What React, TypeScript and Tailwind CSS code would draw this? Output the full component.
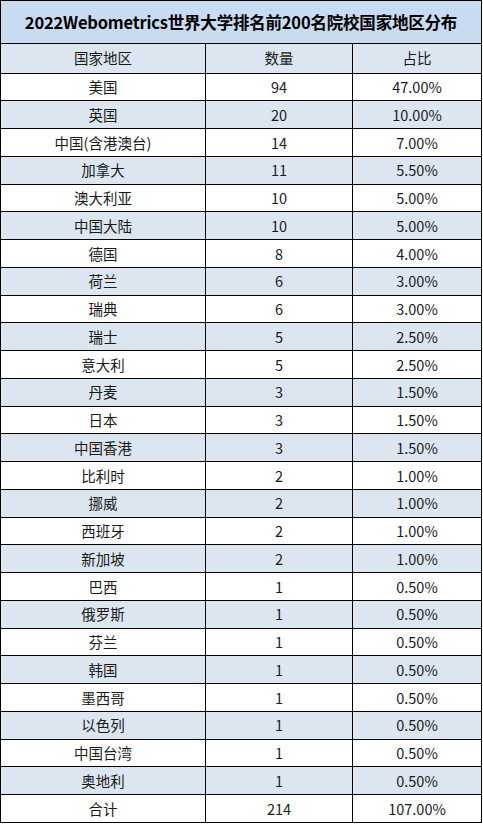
const rows: [string, string, string][] = [
  ["美国", "94", "47.00%"],
  ["英国", "20", "10.00%"],
  ["中国(含港澳台)", "14", "7.00%"],
  ["加拿大", "11", "5.50%"],
  ["澳大利亚", "10", "5.00%"],
  ["中国大陆", "10", "5.00%"],
  ["德国", "8", "4.00%"],
  ["荷兰", "6", "3.00%"],
  ["瑞典", "6", "3.00%"],
  ["瑞士", "5", "2.50%"],
  ["意大利", "5", "2.50%"],
  ["丹麦", "3", "1.50%"],
  ["日本", "3", "1.50%"],
  ["中国香港", "3", "1.50%"],
  ["比利时", "2", "1.00%"],
  ["挪威", "2", "1.00%"],
  ["西班牙", "2", "1.00%"],
  ["新加坡", "2", "1.00%"],
  ["巴西", "1", "0.50%"],
  ["俄罗斯", "1", "0.50%"],
  ["芬兰", "1", "0.50%"],
  ["韩国", "1", "0.50%"],
  ["墨西哥", "1", "0.50%"],
  ["以色列", "1", "0.50%"],
  ["中国台湾", "1", "0.50%"],
  ["奥地利", "1", "0.50%"],
  ["合计", "214", "107.00%"],
];

const font = { fontFamily: '"Noto Sans CJK SC", "Noto Sans", sans-serif' };

function Cell({ children, last }: { children: React.ReactNode; last?: boolean }) {
  return (
    <div
      className={`flex items-center justify-center border-b border-black text-[14.5px] text-[#1a1a1a] ${
        last ? "" : "border-r"
      }`}
    >
      {children}
    </div>
  );
}

export default function App() {
  return (
    <div className="min-h-screen bg-white" style={font}>
      <div className="w-[482px] border-l border-t border-r border-black">
        {/* Title */}
        <div className="h-[43px] flex items-center justify-center border-b border-black bg-[#c9dbf0]">
          <h1 className="text-[16.5px] font-bold text-black tracking-[-0.2px]">
            2022Webometrics世界大学排名前200名院校国家地区分布
          </h1>
        </div>

        {/* Header */}
        <div className="grid grid-cols-[205px_147px_1fr] h-[29.5px] bg-[#dce6f1]">
          <Cell>国家地区</Cell>
          <Cell>数量</Cell>
          <Cell last>占比</Cell>
        </div>

        {rows.map((r, i) => (
          <div
            key={r[0]}
            className={`grid grid-cols-[205px_147px_1fr] h-[27.75px] ${
              i % 2 === 1 ? "bg-[#dce6f1]" : "bg-white"
            }`}
          >
            <Cell>{r[0]}</Cell>
            <Cell>{r[1]}</Cell>
            <Cell last>{r[2]}</Cell>
          </div>
        ))}
      </div>
    </div>
  );
}
